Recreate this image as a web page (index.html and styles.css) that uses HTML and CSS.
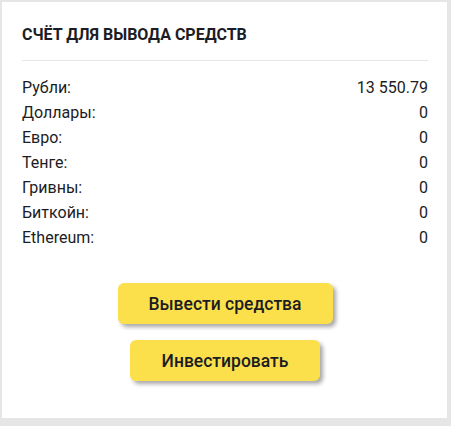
FILE: index.html
```html
<!DOCTYPE html>
<html lang="ru">
<head>
    <meta charset="UTF-8">
    <title>Счёт для вывода средств</title>
    <link rel="stylesheet" href="styles.css">
</head>
<body>
    <div class="card">
        <h2 class="card-title">Счёт для вывода средств</h2>
        <div class="balances">
            <div class="row"><span>Рубли:</span><span>13 550.79</span></div>
            <div class="row"><span>Доллары:</span><span>0</span></div>
            <div class="row"><span>Евро:</span><span>0</span></div>
            <div class="row"><span>Тенге:</span><span>0</span></div>
            <div class="row"><span>Гривны:</span><span>0</span></div>
            <div class="row"><span>Биткойн:</span><span>0</span></div>
            <div class="row"><span>Ethereum:</span><span>0</span></div>
        </div>
        <div class="actions">
            <button class="btn btn-wide">Вывести средства</button>
            <button class="btn">Инвестировать</button>
        </div>
    </div>
</body>
</html>
```
FILE: styles.css
```css
body {
    margin: 0;
    padding: 2px 4px 8px 2px;
    background: #e6e6e6;
    font-family: Roboto, "Liberation Sans", sans-serif;
    color: #1c1c24;
}
.card {
    background: white;
    padding: 23px 19px 37px 20px;
}
.card-title {
    margin: 0;
    padding-bottom: 16px;
    border-bottom: 1px solid #e6e6e6;
    font-size: 16px;
    line-height: 19px;
    font-weight: 700;
    text-transform: uppercase;
}
.balances {
    margin-top: 14px;
}
.row {
    display: flex;
    justify-content: space-between;
    font-size: 16px;
    line-height: 25px;
}
.actions {
    margin-top: 33px;
    display: flex;
    flex-direction: column;
    align-items: center;
    gap: 16px;
}
.btn {
    height: 41px;
    width: 190px;
    border: none;
    border-radius: 6px;
    background: #fbe04b;
    color: #1c1c24;
    font-family: inherit;
    font-size: 17.5px;
    font-weight: 500;
    box-shadow: 3px 3px 4px rgba(0,0,0,0.35);
    cursor: pointer;
}
.btn-wide {
    width: 215px;
}
```
